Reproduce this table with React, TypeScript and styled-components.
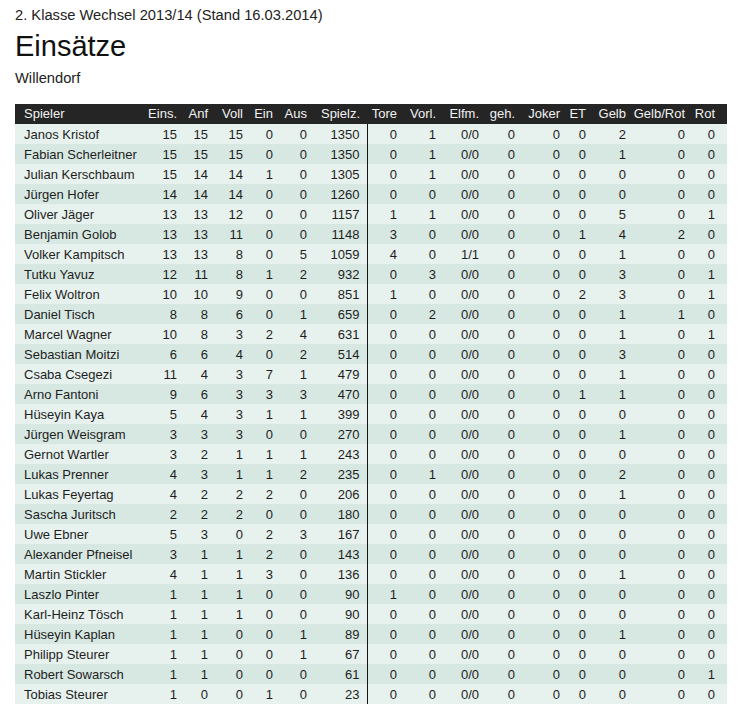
import React from 'react';
import styled, { createGlobalStyle } from 'styled-components';

const GlobalStyle = createGlobalStyle`
  body {
    margin: 0;
    background: #ffffff;
    font-family: "Liberation Sans", Arial, sans-serif;
    color: #222222;
  }
`;

const Page = styled.div`
  padding: 5px 15px 8px;
`;

const Season = styled.div`
  font-size: 14.7px;
  line-height: 20px;
  color: #222;
`;

const Title = styled.h1`
  margin: 3.5px 0 0;
  font-size: 29px;
  font-weight: 400;
  line-height: 34px;
  color: #111;
`;

const Club = styled.div`
  margin-top: 5px;
  font-size: 14.7px;
  line-height: 20px;
  color: #222;
`;

const StatsTable = styled.table`
  margin-top: 16.5px;
  width: 712px;
  table-layout: fixed;
  border-collapse: collapse;
  font-size: 13px;
`;

const HeadCell = styled.th<{ $left?: boolean; $padRight: number }>`
  height: 20px;
  padding: 0 ${p => p.$padRight}px 0 ${p => (p.$left ? 9 : 0)}px;
  background: #252525;
  color: #f2f2f2;
  font-weight: 400;
  text-align: ${p => (p.$left ? 'left' : 'right')};
  white-space: nowrap;
  line-height: 20px;
`;

const Row = styled.tr<{ $alt: boolean }>`
  background: ${p => (p.$alt ? '#d7e8e2' : '#e7f1ed')};
`;

const Cell = styled.td<{ $left?: boolean; $padRight: number; $divider?: boolean }>`
  height: 20px;
  padding: 1px ${p => p.$padRight}px 0 ${p => (p.$left ? 9 : 0)}px;
  text-align: ${p => (p.$left ? 'left' : 'right')};
  white-space: nowrap;
  line-height: 19px;
  color: #1e1e1e;
  border-right: ${p => (p.$divider ? '1px solid #151515' : 'none')};
  box-sizing: border-box;
`;

type Column = { label: string; width: number; pad?: number; divider?: boolean };

const columns: Column[] = [
  { label: 'Spieler', width: 129 },
  { label: 'Eins.', width: 40 },
  { label: 'Anf', width: 31 },
  { label: 'Voll', width: 35 },
  { label: 'Ein', width: 30 },
  { label: 'Aus', width: 34 },
  { label: 'Spielz.', width: 53, divider: true },
  { label: 'Tore', width: 37 },
  { label: 'Vorl.', width: 39 },
  { label: 'Elfm.', width: 43 },
  { label: 'geh.', width: 36 },
  { label: 'Joker', width: 45 },
  { label: 'ET', width: 26 },
  { label: 'Gelb', width: 40 },
  { label: 'Gelb/Rot', width: 57, pad: 5 },
  { label: 'Rot', width: 37, pad: 12 },
];

const players: [string, ...string[]][] = [
  ['Janos Kristof', '15', '15', '15', '0', '0', '1350', '0', '1', '0/0', '0', '0', '0', '2', '0', '0'],
  ['Fabian Scherleitner', '15', '15', '15', '0', '0', '1350', '0', '1', '0/0', '0', '0', '0', '1', '0', '0'],
  ['Julian Kerschbaum', '15', '14', '14', '1', '0', '1305', '0', '1', '0/0', '0', '0', '0', '0', '0', '0'],
  ['Jürgen Hofer', '14', '14', '14', '0', '0', '1260', '0', '0', '0/0', '0', '0', '0', '0', '0', '0'],
  ['Oliver Jäger', '13', '13', '12', '0', '0', '1157', '1', '1', '0/0', '0', '0', '0', '5', '0', '1'],
  ['Benjamin Golob', '13', '13', '11', '0', '0', '1148', '3', '0', '0/0', '0', '0', '1', '4', '2', '0'],
  ['Volker Kampitsch', '13', '13', '8', '0', '5', '1059', '4', '0', '1/1', '0', '0', '0', '1', '0', '0'],
  ['Tutku Yavuz', '12', '11', '8', '1', '2', '932', '0', '3', '0/0', '0', '0', '0', '3', '0', '1'],
  ['Felix Woltron', '10', '10', '9', '0', '0', '851', '1', '0', '0/0', '0', '0', '2', '3', '0', '1'],
  ['Daniel Tisch', '8', '8', '6', '0', '1', '659', '0', '2', '0/0', '0', '0', '0', '1', '1', '0'],
  ['Marcel Wagner', '10', '8', '3', '2', '4', '631', '0', '0', '0/0', '0', '0', '0', '1', '0', '1'],
  ['Sebastian Moitzi', '6', '6', '4', '0', '2', '514', '0', '0', '0/0', '0', '0', '0', '3', '0', '0'],
  ['Csaba Csegezi', '11', '4', '3', '7', '1', '479', '0', '0', '0/0', '0', '0', '0', '1', '0', '0'],
  ['Arno Fantoni', '9', '6', '3', '3', '3', '470', '0', '0', '0/0', '0', '0', '1', '1', '0', '0'],
  ['Hüseyin Kaya', '5', '4', '3', '1', '1', '399', '0', '0', '0/0', '0', '0', '0', '0', '0', '0'],
  ['Jürgen Weisgram', '3', '3', '3', '0', '0', '270', '0', '0', '0/0', '0', '0', '0', '1', '0', '0'],
  ['Gernot Wartler', '3', '2', '1', '1', '1', '243', '0', '0', '0/0', '0', '0', '0', '0', '0', '0'],
  ['Lukas Prenner', '4', '3', '1', '1', '2', '235', '0', '1', '0/0', '0', '0', '0', '2', '0', '0'],
  ['Lukas Feyertag', '4', '2', '2', '2', '0', '206', '0', '0', '0/0', '0', '0', '0', '1', '0', '0'],
  ['Sascha Juritsch', '2', '2', '2', '0', '0', '180', '0', '0', '0/0', '0', '0', '0', '0', '0', '0'],
  ['Uwe Ebner', '5', '3', '0', '2', '3', '167', '0', '0', '0/0', '0', '0', '0', '0', '0', '0'],
  ['Alexander Pfneisel', '3', '1', '1', '2', '0', '143', '0', '0', '0/0', '0', '0', '0', '0', '0', '0'],
  ['Martin Stickler', '4', '1', '1', '3', '0', '136', '0', '0', '0/0', '0', '0', '0', '1', '0', '0'],
  ['Laszlo Pinter', '1', '1', '1', '0', '0', '90', '1', '0', '0/0', '0', '0', '0', '0', '0', '0'],
  ['Karl-Heinz Tösch', '1', '1', '1', '0', '0', '90', '0', '0', '0/0', '0', '0', '0', '0', '0', '0'],
  ['Hüseyin Kaplan', '1', '1', '0', '0', '1', '89', '0', '0', '0/0', '0', '0', '0', '1', '0', '0'],
  ['Philipp Steurer', '1', '1', '0', '0', '1', '67', '0', '0', '0/0', '0', '0', '0', '0', '0', '0'],
  ['Robert Sowarsch', '1', '1', '0', '0', '0', '61', '0', '0', '0/0', '0', '0', '0', '0', '0', '1'],
  ['Tobias Steurer', '1', '0', '0', '1', '0', '23', '0', '0', '0/0', '0', '0', '0', '0', '0', '0'],
];

const App: React.FC = () => {
  return (
    <Page>
      <GlobalStyle />
      <Season>2. Klasse Wechsel 2013/14 (Stand 16.03.2014)</Season>
      <Title>Einsätze</Title>
      <Club>Willendorf</Club>

      <StatsTable>
        <colgroup>
          {columns.map(c => (
            <col key={c.label} style={{ width: c.width }} />
          ))}
        </colgroup>
        <thead>
          <tr>
            {columns.map((c, i) => (
              <HeadCell key={c.label} $left={i === 0} $padRight={i === 0 ? 0 : c.pad ?? 7}>
                {c.label}
              </HeadCell>
            ))}
          </tr>
        </thead>
        <tbody>
          {players.map((row, r) => (
            <Row key={row[0]} $alt={r % 2 === 1}>
              {row.map((value, i) => (
                <Cell
                  key={i}
                  $left={i === 0}
                  $padRight={i === 0 ? 0 : columns[i].pad ?? 7}
                  $divider={columns[i].divider}
                >
                  {value}
                </Cell>
              ))}
            </Row>
          ))}
        </tbody>
      </StatsTable>
    </Page>
  );
};

export default App;
